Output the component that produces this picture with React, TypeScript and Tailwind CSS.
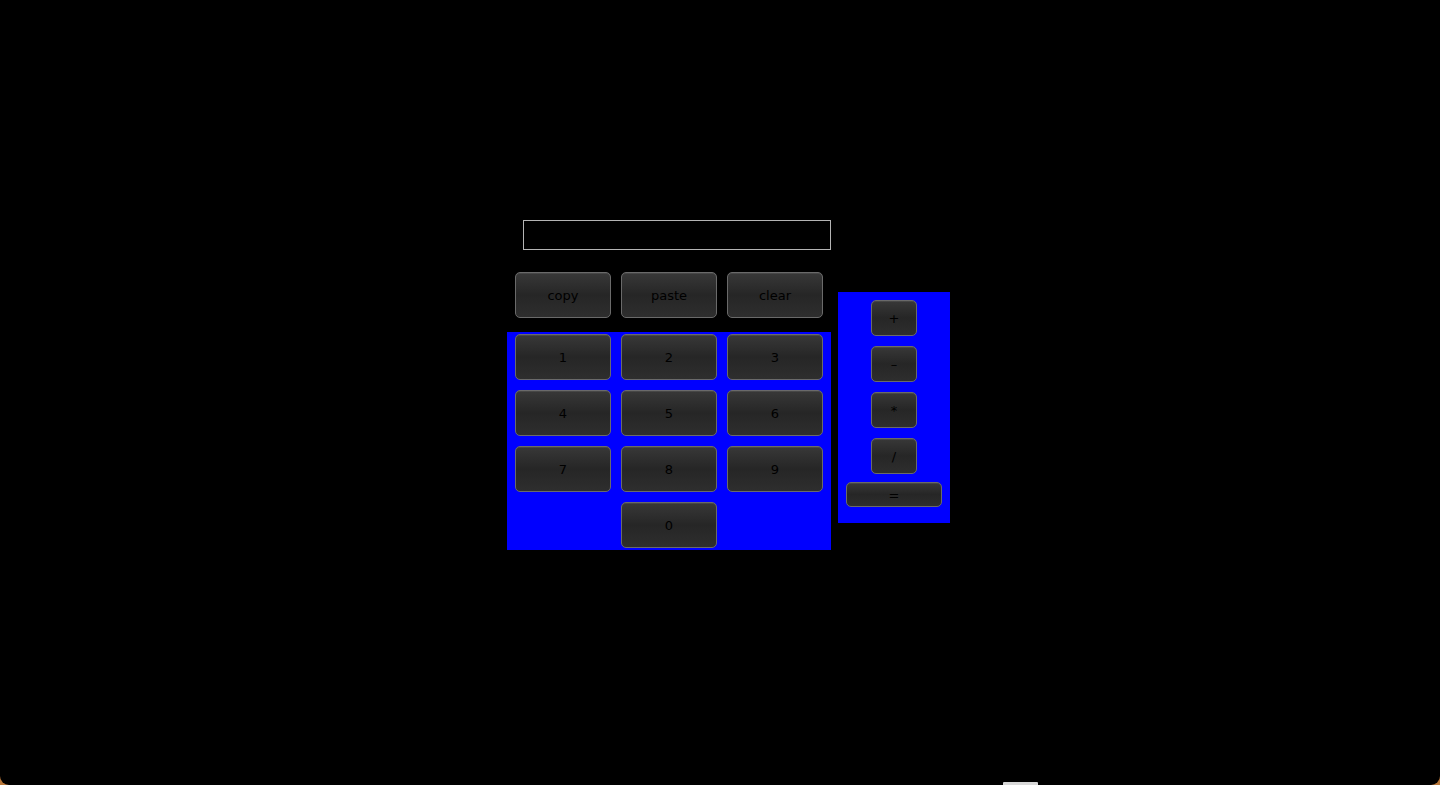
import React from 'react';

const btn =
  'flex items-center justify-center rounded-[5px] border border-[#6a6a6a] bg-gradient-to-b from-[#383838] via-[#262626] to-[#2e2e2e] pt-[2px] text-[13px] text-black shadow-[inset_0_1px_0_rgba(255,255,255,0.08)]';

const DIGITS = [['1', '2', '3'], ['4', '5', '6'], ['7', '8', '9']];
const OPS = ['+', '–', '*', '/'];

export default function App() {
  return (
    <div className="h-[785px] w-[1440px] bg-[#b8773a]" style={{ fontFamily: '"DejaVu Sans", "Liberation Sans", sans-serif' }}>
      <div className="relative h-full w-full overflow-hidden rounded-b-[9px] bg-black">
        <div className="flex pl-[507px] pt-[220px]">
          {/* left column */}
          <div className="flex w-[324px] flex-col">
            <input
              readOnly
              className="ml-[16px] h-[30px] w-[308px] border border-[#b4b4b4] bg-black outline-none"
            />
            <div className="mt-[22px] flex gap-[10px] px-[8px]">
              {['copy', 'paste', 'clear'].map(l => (
                <button key={l} className={`${btn} h-[46px] w-[96px]`}>{l}</button>
              ))}
            </div>
            {/* keypad */}
            <div className="mt-[14px] flex flex-col gap-[10px] bg-[#0000ff] px-[8px] py-[2px]">
              {DIGITS.map((row, i) => (
                <div key={i} className="flex gap-[10px]">
                  {row.map(d => (
                    <button key={d} className={`${btn} h-[46px] w-[96px]`}>{d}</button>
                  ))}
                </div>
              ))}
              <div className="flex justify-center">
                <button className={`${btn} h-[46px] w-[96px]`}>0</button>
              </div>
            </div>
          </div>

          {/* operators */}
          <div className="ml-[7px] mt-[72px] flex h-[231px] w-[112px] flex-col items-center bg-[#0000ff] pt-[8px]">
            <div className="flex flex-col gap-[10px]">
              {OPS.map(o => (
                <button key={o} className={`${btn} h-[36px] w-[46px]`}>{o}</button>
              ))}
            </div>
            <button className={`${btn} mt-[8px] h-[25px] w-[96px]`}>=</button>
          </div>
        </div>
        <div className="absolute bottom-0 left-[1003px] h-[3px] w-[35px] rounded-t-[1px] bg-[#d8d8d8]" />
      </div>
    </div>
  );
}
